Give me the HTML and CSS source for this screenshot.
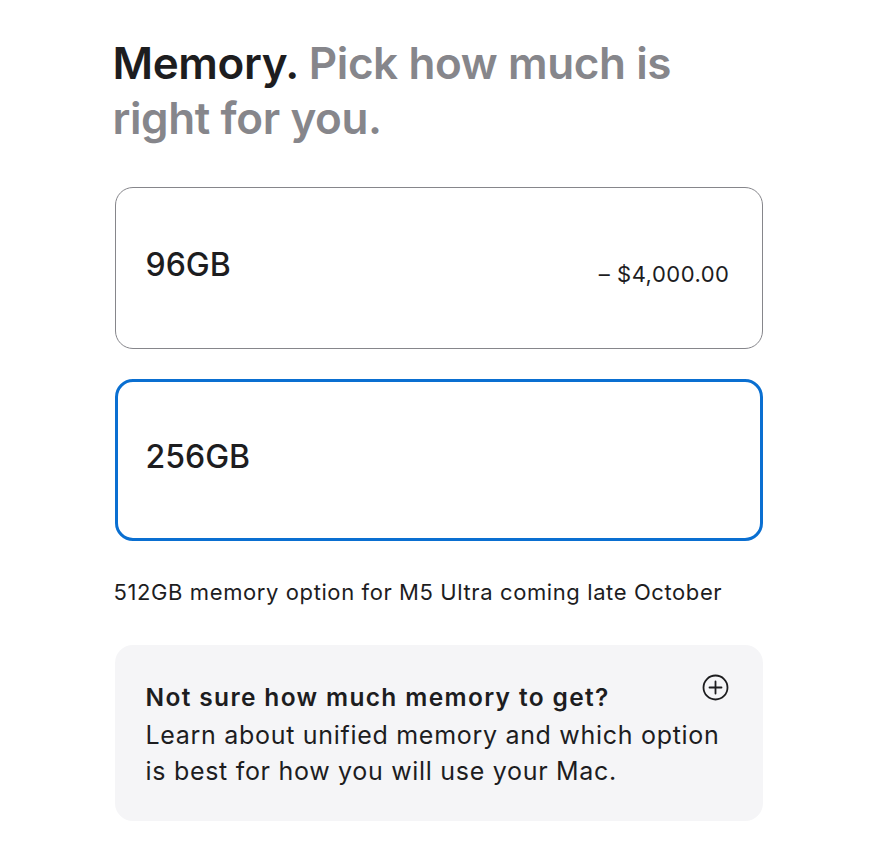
FILE: index.html
```html
<!DOCTYPE html>
<html lang="en">
<head>
<meta charset="utf-8">
<title>Memory</title>
<link rel="stylesheet" href="styles.css">
</head>
<body>
<main class="section">
  <h2 class="heading"><span class="heading-strong">Memory.</span> <span class="heading-soft">Pick how much is</span> <span class="heading-soft">right for you.</span></h2>
  <div class="options">
    <div class="option">
      <span class="option-label">96GB</span>
      <span class="option-price">– $4,000.00</span>
    </div>
    <div class="option option-selected">
      <span class="option-label">256GB</span>
    </div>
  </div>
  <p class="note">512GB memory option for M5 Ultra coming late October</p>
  <div class="info">
    <p class="info-title">Not sure how much memory to get?</p>
    <svg class="info-icon" width="27" height="27" viewBox="0 0 27 27" aria-hidden="true">
      <circle cx="13.5" cy="13.5" r="12" fill="none" stroke="#1d1d1f" stroke-width="1.8"/>
      <path d="M13.5 7.5v12M7.5 13.5h12" stroke="#1d1d1f" stroke-width="1.8" stroke-linecap="round"/>
    </svg>
    <p class="info-body">Learn about unified memory and which option is best for how you will use your Mac.</p>
  </div>
</main>
</body>
</html>
```

FILE: styles.css
```css
* { box-sizing: border-box; }
html, body { margin: 0; padding: 0; background: #fff; }
body {
  font-family: Inter, "Noto Sans", "Liberation Sans", sans-serif;
  color: #1d1d1f;
}
.section {
  width: 648px;
  margin: 0 auto;
  padding-top: 36px;
}
.heading {
  margin: 0 0 0 -2px;
  font-size: 44px;
  line-height: 55px;
  font-weight: 600;
  letter-spacing: -0.4px;
  padding-right: 40px;
}
.heading-strong { color: #1d1d1f; }
.heading-soft { color: #86868b; }
.options {
  margin-top: 41px;
  display: flex;
  flex-direction: column;
  gap: 30px;
}
.option {
  height: 162px;
  border: 1px solid #86868b;
  border-radius: 18px;
  padding: 0 32px 0 30px;
  display: flex;
  justify-content: space-between;
  align-items: center;
}
.option-selected {
  border: 3px solid #0a6fd1;
  padding: 0 30px 0 28px;
}
.option-label {
  font-size: 32px;
  font-weight: 500;
  letter-spacing: 0;
  margin-top: -8px;
}
.option-price {
  font-size: 22px;
  font-weight: 400;
  letter-spacing: 0.5px;
  margin-top: 12px;
}
.note {
  margin: 38px 0 0 -1px;
  font-size: 22px;
  line-height: 26px;
  letter-spacing: 0.6px;
}
.info {
  margin-top: 40px;
  background: #f5f5f7;
  border-radius: 18px;
  padding: 32px 34px 32px 31px;
  display: grid;
  grid-template-columns: 1fr auto;
  align-items: start;
  min-height: 176px;
}
.info-title {
  margin: 0;
  font-size: 24.5px;
  line-height: 40px;
  font-weight: 600;
  letter-spacing: 1.35px;
}
.info-body {
  grid-column: 1 / -1;
  margin: 0;
  font-size: 25px;
  line-height: 36px;
  font-weight: 400;
  letter-spacing: 0.7px;
}
.info-icon { margin-top: -3px; }
```
